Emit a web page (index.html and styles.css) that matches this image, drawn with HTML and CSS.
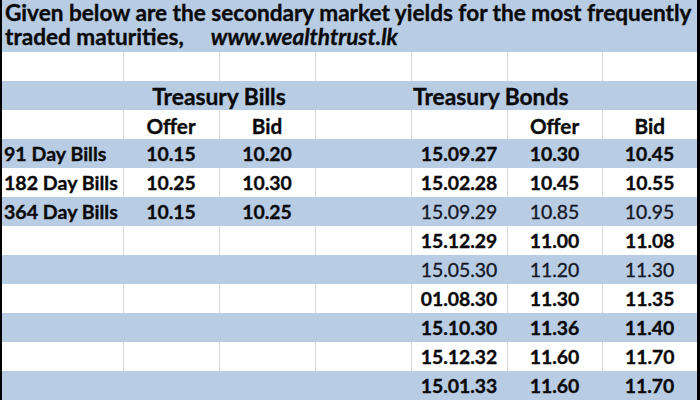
FILE: index.html
```html
<!DOCTYPE html>
<html>
<head>
<meta charset="utf-8">
<link rel="stylesheet" href="styles.css">
</head>
<body>
<div class="sheet">
<table class="grid">
  <colgroup>
    <col class="c1"><col class="c"><col class="c"><col class="c"><col class="c"><col class="cn"><col class="cn">
  </colgroup>
  <tr class="title-row">
    <td colspan="7" class="title"><span class="line">Given below are the secondary market yields for the most frequently</span><span class="line">traded maturities,<span class="site">www.wealthtrust.lk</span></span></td>
  </tr>
  <tr class="w"><td></td><td></td><td></td><td></td><td></td><td></td><td></td></tr>
  <tr class="b">
    <td></td><td colspan="2" class="group">Treasury Bills</td><td></td><td colspan="3" class="group-l">Treasury Bonds</td>
  </tr>
  <tr class="w head">
    <td></td><td>Offer</td><td>Bid</td><td></td><td></td><td>Offer</td><td>Bid</td>
  </tr>
  <tr class="b">
    <td class="lbl">91 Day Bills</td><td>10.15</td><td>10.20</td><td></td><td>15.09.27</td><td>10.30</td><td>10.45</td>
  </tr>
  <tr class="w">
    <td class="lbl">182 Day Bills</td><td>10.25</td><td>10.30</td><td></td><td>15.02.28</td><td>10.45</td><td>10.55</td>
  </tr>
  <tr class="b">
    <td class="lbl">364 Day Bills</td><td>10.15</td><td>10.25</td><td></td><td class="reg">15.09.29</td><td class="reg">10.85</td><td class="reg">10.95</td>
  </tr>
  <tr class="w">
    <td></td><td></td><td></td><td></td><td>15.12.29</td><td>11.00</td><td>11.08</td>
  </tr>
  <tr class="b">
    <td></td><td></td><td></td><td></td><td class="reg">15.05.30</td><td class="reg">11.20</td><td class="reg">11.30</td>
  </tr>
  <tr class="w">
    <td></td><td></td><td></td><td></td><td>01.08.30</td><td>11.30</td><td>11.35</td>
  </tr>
  <tr class="b">
    <td></td><td></td><td></td><td></td><td>15.10.30</td><td>11.36</td><td>11.40</td>
  </tr>
  <tr class="w">
    <td></td><td></td><td></td><td></td><td>15.12.32</td><td>11.60</td><td>11.70</td>
  </tr>
  <tr class="b">
    <td></td><td></td><td></td><td></td><td>15.01.33</td><td>11.60</td><td>11.70</td>
  </tr>
</table>
</div>
</body>
</html>
```

FILE: styles.css
```css
html, body {
  margin: 0;
  padding: 0;
  background: #ffffff;
}
.sheet {
  width: 700px;
  height: 400px;
  overflow: hidden;
  box-sizing: border-box;
  border-left: 2px solid #000;
  border-right: 3px solid #000;
}
.grid {
  border-collapse: collapse;
  table-layout: fixed;
  width: 695px;
  font-family: Lato, "Liberation Sans", sans-serif;
  font-weight: 700;
  font-size: 19.4px;
  color: #0a0a0a;
  -webkit-text-stroke: 0.35px #0a0a0a;
}
.c1 { width: 121px; }
.c { width: 96px; }
.cn { width: 95px; }
.grid td {
  padding: 0;
  height: 29px;
  box-sizing: border-box;
  text-align: center;
  vertical-align: middle;
  white-space: nowrap;
  overflow: visible;
}
.grid .title-row td {
  height: 52px;
}
.grid .title {
  background: #b8cce4;
  text-align: left;
  padding-left: 3px;
  padding-top: 1px;
  font-size: 22.6px;
  line-height: 24px;
  vertical-align: top;
}
.line {
  display: block;
  height: 24px;
}
.site {
  font-style: italic;
  margin-left: 27px;
}
.b td {
  background: #b8cce4;
}
.w td {
  background: #ffffff;
  border-left: 1px solid #d9d9d9;
}
.w td:first-child {
  border-left: none;
}
.head td {
  font-size: 20.7px;
  padding-top: 2px;
}
.grid .group {
  font-size: 22.8px;
}
.grid .group-l {
  font-size: 22.8px;
  text-align: left;
  padding-left: 2px;
}
.grid .lbl {
  text-align: left;
  padding-left: 2px;
  font-size: 19.6px;
}
.grid .reg {
  font-weight: 400;
  color: #141726;
  -webkit-text-stroke: 0.35px #141726;
}
```
